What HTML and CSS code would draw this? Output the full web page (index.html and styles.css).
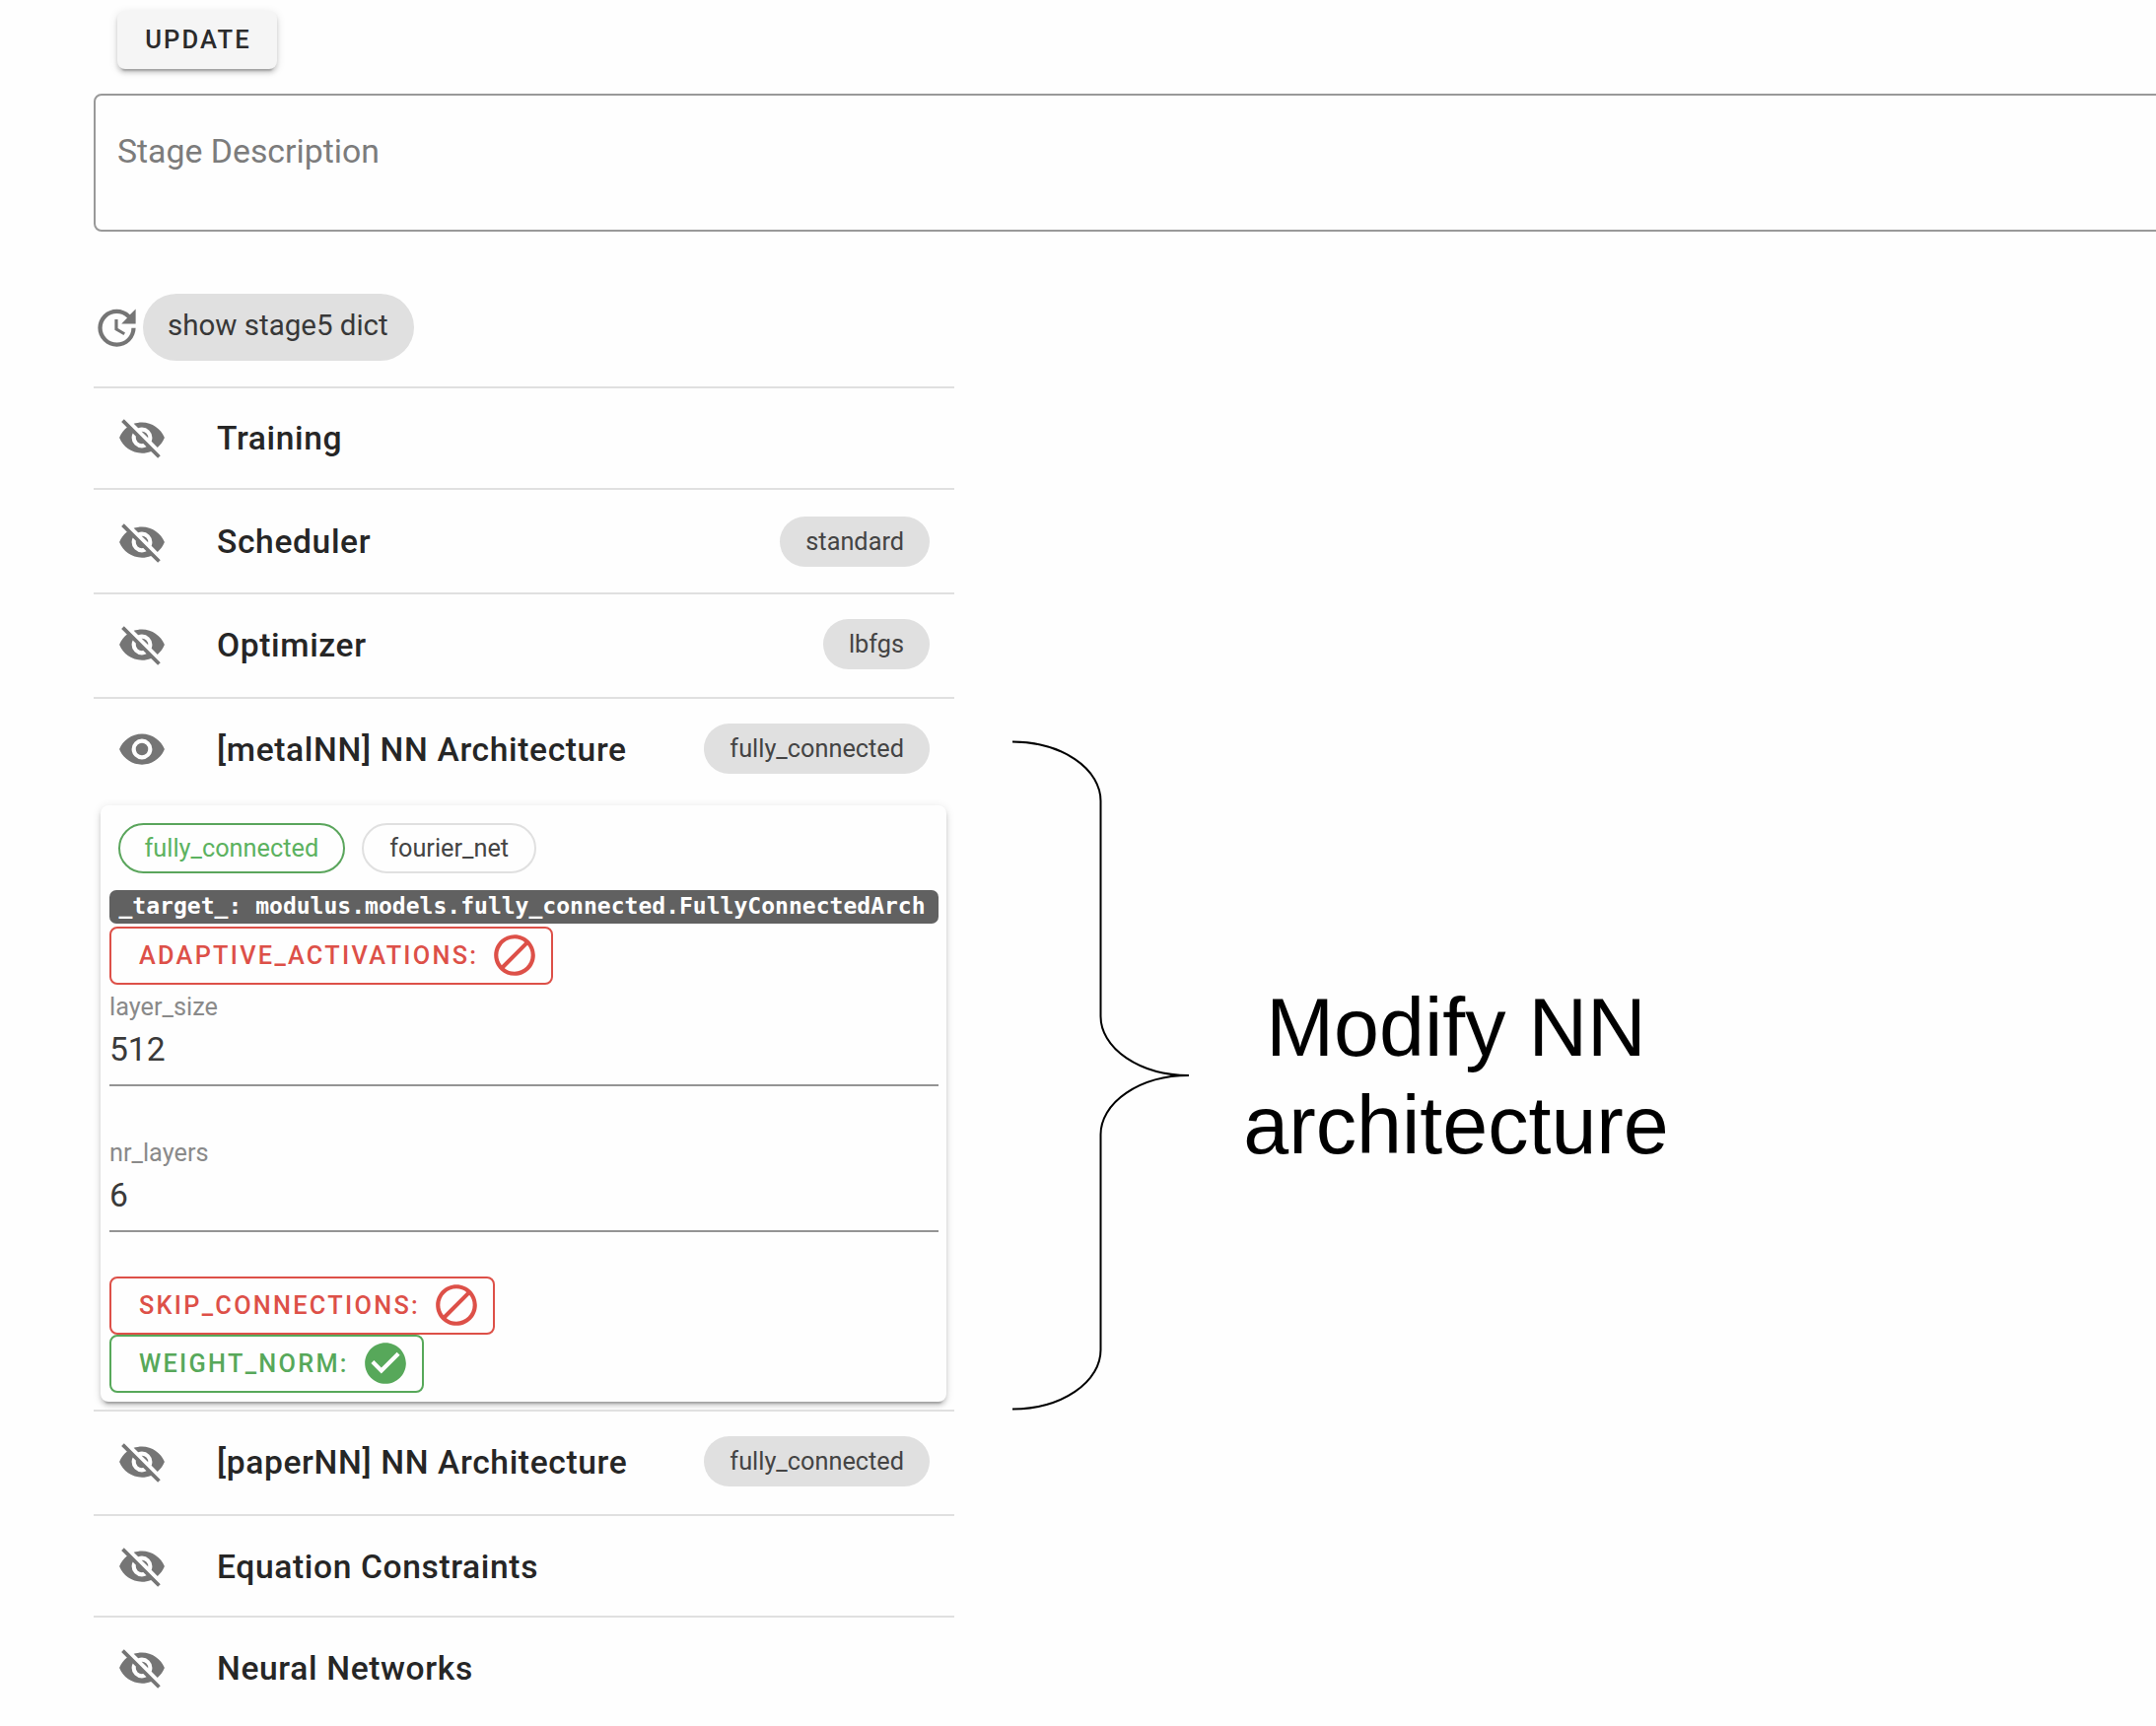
FILE: index.html
```html
<!DOCTYPE html>
<html lang="en">
<head>
<meta charset="utf-8">
<title>Stage editor</title>
<link rel="stylesheet" href="styles.css">
</head>
<body>
<svg class="defs" width="0" height="0">
  <symbol id="eye" viewBox="0 0 24 24"><path d="M12,9A3,3 0 0,0 9,12A3,3 0 0,0 12,15A3,3 0 0,0 15,12A3,3 0 0,0 12,9M12,17A5,5 0 0,1 7,12A5,5 0 0,1 12,7A5,5 0 0,1 17,12A5,5 0 0,1 12,17M12,4.5C7,4.5 2.73,7.61 1,12C2.73,16.39 7,19.5 12,19.5C17,19.5 21.27,16.39 23,12C21.27,7.61 17,4.5 12,4.5Z"/></symbol>
  <symbol id="eye-off" viewBox="0 0 24 24"><path d="M11.83,9L15,12.16C15,12.11 15,12.05 15,12A3,3 0 0,0 12,9C11.94,9 11.89,9 11.83,9M7.53,9.8L9.08,11.35C9.03,11.56 9,11.77 9,12A3,3 0 0,0 12,15C12.22,15 12.44,14.97 12.65,14.92L14.2,16.47C13.53,16.8 12.79,17 12,17A5,5 0 0,1 7,12C7,11.21 7.2,10.47 7.53,9.8M2,4.27L4.28,6.55L4.73,7C3.08,8.3 1.78,10 1,12C2.73,16.39 7,19.5 12,19.5C13.55,19.5 15.03,19.2 16.38,18.66L16.81,19.08L19.73,22L21,20.73L3.27,3M12,7A5,5 0 0,1 17,12C17,12.64 16.87,13.26 16.64,13.82L19.57,16.75C21.07,15.5 22.27,13.86 23,12C21.27,7.61 17,4.5 12,4.5C10.6,4.5 9.26,4.75 8,5.2L10.17,7.35C10.74,7.13 11.35,7 12,7Z"/></symbol>
  <symbol id="cancel" viewBox="0 0 24 24"><path d="M12 2C17.5 2 22 6.5 22 12S17.5 22 12 22 2 17.5 2 12 6.500 2 12 2M12 4C10.1 4 8.400 4.600 7.100 5.700L18.300 16.900C19.300 15.500 20 13.800 20 12C20 7.600 16.400 4 12 4M16.900 18.300L5.700 7.100C4.600 8.400 4 10.100 4 12C4 16.400 7.600 20 12 20C13.900 20 15.600 19.400 16.900 18.300Z" transform="matrix(-1 0 0 1 24 0)"/></symbol>
  <symbol id="check" viewBox="0 0 24 24"><path d="M12 2C6.500 2 2 6.500 2 12S6.500 22 12 22 22 17.500 22 12 17.500 2 12 2M10 17L5 12L6.410 10.590L10 14.170L17.590 6.580L19 8L10 17Z"/></symbol>
  <symbol id="update" viewBox="0 0 24 24"><path d="M21,10.12H14.22L16.96,7.3C14.23,4.6 9.81,4.5 7.08,7.2C4.35,9.91 4.35,14.28 7.08,17C9.81,19.7 14.23,19.7 16.96,17C18.32,15.65 19,14.08 19,12.1H21C21,14.08 20.12,16.65 18.36,18.39C14.85,21.87 9.15,21.87 5.64,18.39C2.14,14.92 2.11,9.28 5.62,5.81C9.13,2.34 14.76,2.34 18.27,5.81L21,3V10.12M12.5,8V12.25L16,14.33L15.28,15.54L11,13V8H12.5Z"/></symbol>
</svg>
<main class="page">
  <button class="update" type="button">UPDATE</button>
  <div class="description">Stage Description</div>
  <div class="toolbar">
    <svg class="icon icon--update"><use href="#update"/></svg>
    <span class="chip chip--large">show stage5 dict</span>
  </div>
  <div class="body">
    <section class="panel">
      <div class="row row--short"><svg class="icon"><use href="#eye-off"/></svg><h2>Training</h2></div>
      <div class="row row--low"><svg class="icon"><use href="#eye-off"/></svg><h2>Scheduler</h2><span class="chip">standard</span></div>
      <div class="row"><svg class="icon"><use href="#eye-off"/></svg><h2>Optimizer</h2><span class="chip">lbfgs</span></div>
      <div class="row"><svg class="icon"><use href="#eye"/></svg><h2>[metalNN] NN Architecture</h2><span class="chip">fully_connected</span></div>
      <div class="card">
        <div class="options">
          <span class="chip chip--outlined chip--active">fully_connected</span>
          <span class="chip chip--outlined">fourier_net</span>
        </div>
        <code class="target">_target_: modulus.models.fully_connected.FullyConnectedArch</code>
        <button class="toggle toggle--off" type="button"><span>ADAPTIVE_ACTIVATIONS:</span><svg class="icon"><use href="#cancel"/></svg></button>
        <div class="field"><label>layer_size</label><div class="value">512</div></div>
        <div class="field field--last"><label>nr_layers</label><div class="value">6</div></div>
        <button class="toggle toggle--off" type="button"><span>SKIP_CONNECTIONS:</span><svg class="icon"><use href="#cancel"/></svg></button>
        <button class="toggle toggle--on" type="button"><span>WEIGHT_NORM:</span><svg class="icon"><use href="#check"/></svg></button>
      </div>
      <div class="row"><svg class="icon"><use href="#eye-off"/></svg><h2>[paperNN] NN Architecture</h2><span class="chip">fully_connected</span></div>
      <div class="row row--short"><svg class="icon"><use href="#eye-off"/></svg><h2>Equation Constraints</h2></div>
      <div class="row"><svg class="icon"><use href="#eye-off"/></svg><h2>Neural Networks</h2></div>
    </section>
    <aside class="callout">
      <svg class="brace" viewBox="0 0 180 680"><path d="M0 1.500A89.500 60 0 0 1 89.500 61.500V280A89.500 60 0 0 0 179 340A89.500 60 0 0 0 89.500 400V618.500A89.500 60 0 0 1 0 678.500"/></svg>
      <p>Modify NN<br>architecture</p>
    </aside>
  </div>
</main>
</body>
</html>
```
FILE: styles.css
```css
* { box-sizing: border-box; }
body {
  margin: 0;
  height: 1751px;
  overflow: hidden;
  background: #fefefe;
  color: #262626;
  font-family: Roboto, sans-serif;
}
h2, p { margin: 0; }
button { font-family: inherit; }
.defs { display: block; height: 0; }
.page { padding: 11px 0 0 95px; }
.icon { flex: none; width: 50px; height: 50px; fill: currentColor; }

.update {
  display: block;
  width: 162px;
  height: 59px;
  margin-left: 24px;
  padding: 0 0 2px 2px;
  border: 0;
  border-radius: 8px;
  background: #f5f5f5;
  color: #2b2b2b;
  font-size: 25.6px;
  font-weight: 500;
  letter-spacing: 2.1px;
  box-shadow: 0 6px 2px -4px rgba(0,0,0,.2), 0 4px 4px rgba(0,0,0,.14), 0 2px 10px rgba(0,0,0,.12);
}
.description {
  height: 140px;
  margin: 25px -20px 0 0;
  padding: 37px 22px;
  border: 2px solid #999;
  border-radius: 8px;
  color: #7c7c7c;
  font-size: 33.8px;
  line-height: 40px;
}
.toolbar { display: flex; align-items: center; height: 68px; margin-top: 63px; }
.icon--update { margin-left: -2px; width: 51px; height: 51px; margin-right: 1px; color: #757575; }

.chip {
  display: flex;
  align-items: center;
  height: 51px;
  padding: 0 26px 1px;
  border-radius: 26px;
  background: #e0e0e0;
  color: #444;
  font-size: 25.3px;
}
.chip--large { height: 68px; padding: 0 26px 4px 25px; border-radius: 34px; font-size: 29.5px; color: #383838; }
.chip--outlined { padding: 0 26px; border: 2px solid #e0e0e0; background: none; }
.chip--active { padding: 0 25px; border-color: #5aa55c; color: #5cb260; }

.body { display: flex; align-items: flex-start; margin-top: 25.6px; }
.panel { width: 873px; }
.row {
  display: flex;
  align-items: center;
  height: 106px;
  padding: 0 25px 2px 24px;
  border-top: 2px solid #e0e0e0;
}
.row--short { height: 103.4px; padding-bottom: 0; }
.row--low { padding-bottom: 0; padding-top: 2px; }
.row h2 { flex: 1; margin-left: 51px; padding-top: 2px; font-size: 33.6px; font-weight: 500; line-height: 44px; letter-spacing: .63px; }
.row--low h2 { padding-top: 0; }
.row .icon { color: #757575; }

.card {
  display: flex;
  flex-direction: column;
  align-items: flex-start;
  height: 605px;
  margin: 4px 8px 8px 7px;
  padding: 18px 8px 0 9px;
  border-radius: 8px;
  background: #fefefe;
  box-shadow: 0 6px 2px -4px rgba(0,0,0,.2), 0 4px 4px rgba(0,0,0,.14), 0 2px 10px rgba(0,0,0,.12);
}
.options { display: flex; gap: 17px; margin: 0 0 17px 8.500px; }
.target {
  align-self: stretch;
  height: 34px;
  padding-left: 9.5px;
  border-radius: 7px;
  background: #616161;
  color: #fff;
  font: bold 23.040px/32px "DejaVu Sans Mono", monospace;
  white-space: nowrap;
}
.toggle {
  display: flex;
  align-items: center;
  height: 59px;
  padding: 0 12px 0 28px;
  border: 2px solid;
  border-radius: 8px;
  background: none;
  font-size: 25.3px;
  font-weight: 500;
  letter-spacing: 2.28px;
}
.toggle .icon { margin-left: 12px; }
.toggle--off { color: #dd5048; }
.toggle--on { color: #57a85a; }
.target + .toggle { margin-top: 3px; }
.field { align-self: stretch; height: 103px; border-bottom: 2px solid #949494; }
.field--last { margin: 45px 0 45px; }
.field label { display: block; height: 44px; padding-top: 6px; color: #8a8a8a; font-size: 25.3px; line-height: 34px; }
.value { padding-top: 1px; font-size: 33.6px; line-height: 42px; color: #3a3a3a; }

.callout { display: flex; margin: 359px 0 0 59px; color: #000; }
.brace { width: 180px; height: 680px; fill: none; stroke: #000; stroke-width: 2; }
.callout p {
  width: 540px;
  margin-top: 242px;
  font: 82.6px/99px "Liberation Sans", Arial, sans-serif;
  text-align: center;
}
```
